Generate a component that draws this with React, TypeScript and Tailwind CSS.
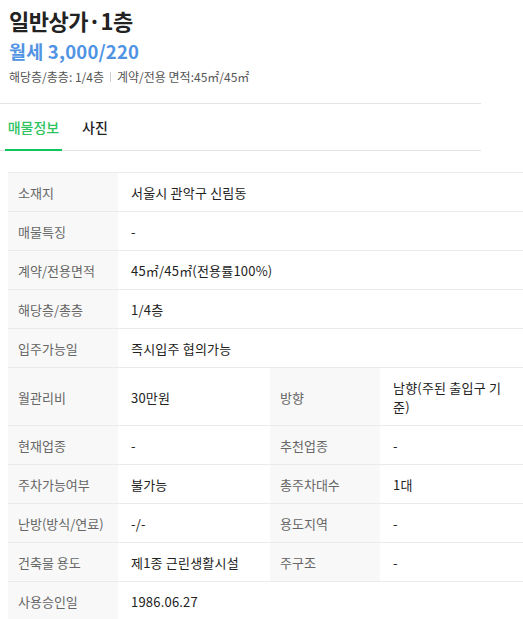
import React from "react";

type Cell = { label: string; value: string };

const singleRows: Cell[] = [
  { label: "소재지", value: "서울시 관악구 신림동" },
  { label: "매물특징", value: "-" },
  { label: "계약/전용면적", value: "45㎡/45㎡(전용률100%)" },
  { label: "해당층/총층", value: "1/4층" },
  { label: "입주가능일", value: "즉시입주 협의가능" },
];

const pairRows: [Cell, Cell][] = [
  [
    { label: "월관리비", value: "30만원" },
    { label: "방향", value: "남향(주된 출입구 기준)" },
  ],
  [
    { label: "현재업종", value: "-" },
    { label: "추천업종", value: "-" },
  ],
  [
    { label: "주차가능여부", value: "불가능" },
    { label: "총주차대수", value: "1대" },
  ],
  [
    { label: "난방(방식/연료)", value: "-/-" },
    { label: "용도지역", value: "-" },
  ],
  [
    { label: "건축물 용도", value: "제1종 근린생활시설" },
    { label: "주구조", value: "-" },
  ],
];

const th = "bg-[#f8f8f8] text-[#666666] font-normal text-left align-middle pl-[10px] pr-2 pt-[10px] pb-[9px]";
const td = "text-[#222222] text-left align-middle pl-[13px] pr-3 pt-[10px] pb-[9px] tracking-[0.2px]";

export default function App() {
  return (
    <div
      className="w-[523px] h-[619px] overflow-hidden bg-white"
      style={{ fontFamily: '"Noto Sans CJK KR", "Noto Sans", sans-serif' }}
    >
      <div className="w-[481px] border-b border-[#e4e4e4] pl-[9px] pt-[5px] pb-[18px]">
        <h1 className="text-[22px] leading-[30px] font-bold text-[#222222] tracking-[-0.5px]">
          일반상가·1층
        </h1>
        <div className="text-[18.5px] leading-[26px] font-bold text-[#5193e3] mt-[3px] tracking-[0.2px]">
          월세 3,000/220
        </div>
        <div className="flex items-center text-[12px] leading-[16px] text-[#555555] mt-[5px]">
          <span>해당층/총층: 1/4층</span>
          <span className="mx-[6px] h-[10px] w-px bg-[#cccccc]" />
          <span>계약/전용 면적:45㎡/45㎡</span>
        </div>
      </div>

      <div className="w-[481px] flex items-end h-[47px] border-b border-[#e4e4e4] pl-[5px]">
        <div className="w-[57px] h-full flex items-center justify-center border-b-2 border-[#0fc65c] -mb-px pt-[1px]">
          <span className="text-[14px] font-medium text-[#2ec35f]">매물정보</span>
        </div>
        <div className="h-full flex items-center ml-[20px] pt-[1px]">
          <span className="text-[14px] font-medium text-[#222222]">사진</span>
        </div>
      </div>

      <table className="ml-[8px] mt-[21px] w-[515px] table-fixed border-collapse text-[13px] leading-[19px]">
        <colgroup>
          <col className="w-[110px]" />
          <col className="w-[152px]" />
          <col className="w-[110px]" />
          <col className="w-[143px]" />
        </colgroup>
        <tbody>
          {singleRows.map((r) => (
            <tr key={r.label} className="border-t border-[#ebebeb]">
              <th className={th}>{r.label}</th>
              <td className={td} colSpan={3}>
                {r.value}
              </td>
            </tr>
          ))}
          {pairRows.map(([a, b]) => (
            <tr key={a.label} className="border-t border-[#ebebeb]">
              <th className={th}>{a.label}</th>
              <td className={td}>{a.value}</td>
              <th className={th}>{b.label}</th>
              <td className={`${td} pr-[14px]`}>{b.value}</td>
            </tr>
          ))}
          <tr className="border-t border-[#ebebeb]">
            <th className={th}>사용승인일</th>
            <td className={td} colSpan={3}>
              1986.06.27
            </td>
          </tr>
        </tbody>
      </table>
    </div>
  );
}
